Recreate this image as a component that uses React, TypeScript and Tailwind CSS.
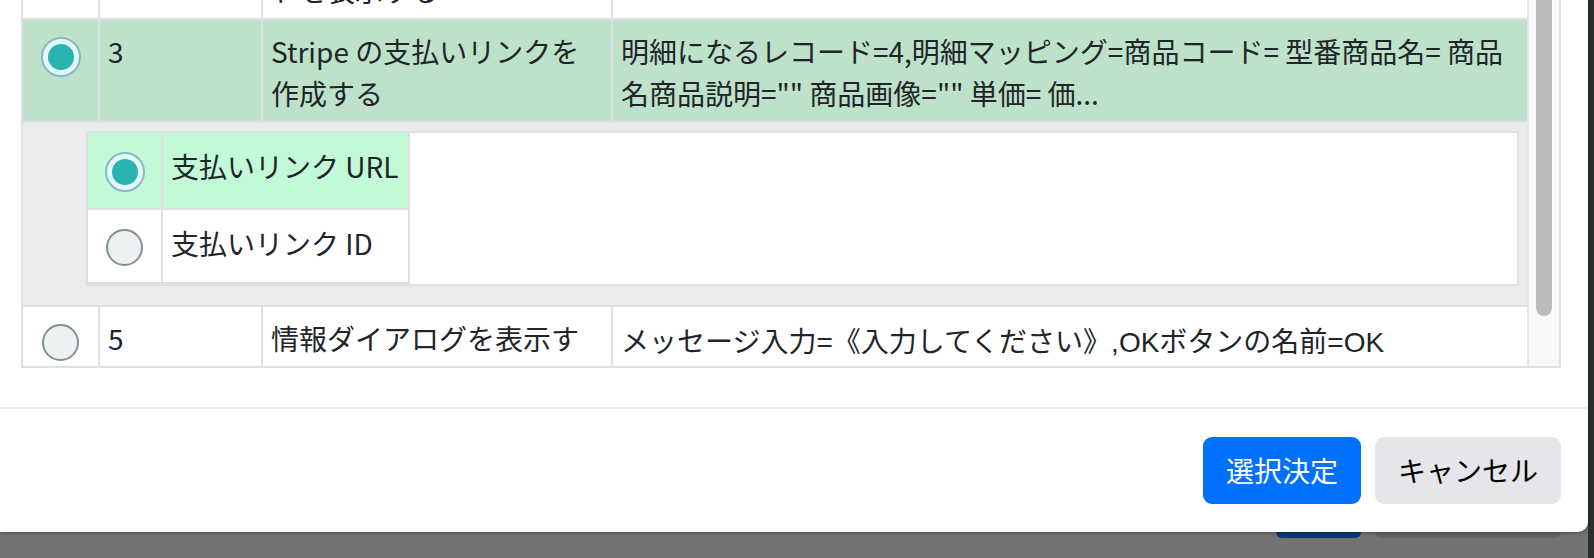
import React from "react"

const line = "border-[#dde1e4]"
const jp = "font-['Noto_Sans_CJK_JP',sans-serif]"
const sys = "font-['Liberation_Sans','Noto_Sans_CJK_JP',sans-serif]"

function Radio({ checked }: { checked: boolean }) {
  if (checked) {
    return (
      <span className="flex h-[40px] w-[40px] items-center justify-center rounded-full border-2 border-[#86b9c3] bg-[#e3f9f9]">
        <span className="h-[26px] w-[26px] rounded-full bg-[#29b2af]" />
      </span>
    )
  }
  return <span className="block h-[37px] w-[37px] rounded-full border-2 border-[#7d9393] bg-[#edf1f1]" />
}

interface RowProps {
  selected?: boolean
  no: string
  name: React.ReactNode
  params?: React.ReactNode
  paramsClass?: string
}

function Row({ selected = false, no, name, params, paramsClass = "pt-[10px]" }: RowProps) {
  return (
    <div className={`flex border-b-2 ${line} ${selected ? "bg-[#bde2c9]" : "bg-white"}`}>
      <div className={`flex w-[77px] shrink-0 justify-center border-r-2 ${line} pt-[17px]`}>
        <Radio checked={selected} />
      </div>
      <div className={`w-[163px] shrink-0 border-r-2 ${line} pb-[7px] pl-[8px] pt-[10px]`}>{no}</div>
      <div className={`w-[350px] shrink-0 whitespace-nowrap border-r-2 ${line} pb-[7px] pl-[8px] pt-[10px]`}>
        {name}
      </div>
      <div className={`flex-1 whitespace-nowrap pb-[7px] pl-[8px] ${paramsClass}`}>{params}</div>
    </div>
  )
}

function SubRow({ selected = false, label }: { selected?: boolean; label: string }) {
  return (
    <div className={`flex border-b-2 ${line} ${selected ? "h-[77px] bg-[#c2fad8]" : "h-[74px] bg-white"}`}>
      <div className={`flex w-[75px] shrink-0 items-center justify-center border-r-2 ${line} pt-[2px]`}>
        <Radio checked={selected} />
      </div>
      <div className={`w-[247px] shrink-0 whitespace-nowrap border-r-2 ${line} pl-[8px] pt-[12px]`}>{label}</div>
    </div>
  )
}

export default function App() {
  return (
    <div className="flex h-[558px] w-[1594px] overflow-hidden bg-[#2b2f2c]">
      <div className="flex w-[1588px] shrink-0 flex-col bg-[#737373]">
        {/* dialog */}
        <div className="relative z-10 flex h-[532px] shrink-0 flex-col rounded-br-[10px] bg-white shadow-[0_1px_4px_rgba(0,0,0,0.35)]">
          <div className="h-[407px] shrink-0 pl-[21px] pr-[27px]">
            <div
              className={`flex h-[368px] overflow-hidden border-x-2 border-b-2 ${line} text-[28px] leading-[42px] text-[#212529] ${jp}`}
            >
              <div className="min-w-0 flex-1">
                <div className="-mt-[83px]">
                  <Row
                    no="2"
                    name={
                      <>
                        QRコー
                        <br />
                        ドを表示する
                      </>
                    }
                  />
                  <Row
                    selected
                    no="3"
                    name={
                      <>
                        Stripe の支払いリンクを
                        <br />
                        作成する
                      </>
                    }
                    params={
                      <>
                        明細になるレコード=4,明細マッピング=商品コード= 型番商品名= 商品
                        <br />
                        名商品説明="" 商品画像="" 単価= 価...
                      </>
                    }
                  />
                  {/* expanded output picker */}
                  <div className={`border-b-2 ${line} bg-[#e9ebec] pb-[19px] pl-[63px] pr-[8px] pt-[8px]`}>
                    <div className={`h-[155px] border-2 ${line} bg-white`}>
                      <div className="w-fit">
                        <SubRow selected label="支払いリンク URL" />
                        <SubRow label="支払いリンク ID" />
                      </div>
                    </div>
                  </div>
                  <Row
                    no="5"
                    name={
                      <>
                        情報ダイアログを表示す
                        <br />る
                      </>
                    }
                    params={<span className={sys}>メッセージ入力=《入力してください》,OKボタンの名前=OK</span>}
                    paramsClass="pt-[12px]"
                  />
                </div>
              </div>
              {/* scrollbar */}
              <div className="w-[32px] shrink-0 border-l-2 border-[#e3e5e8] bg-[#f8f8f8]">
                <div className="mx-auto h-[316px] w-[16px] rounded-b-full bg-[#bcbcbc]" />
              </div>
            </div>
          </div>

          <div className={`flex flex-1 items-start justify-end gap-[14px] border-t-2 border-[#eceef0] pr-[27px] pt-[28px] text-[28px] ${jp}`}>
            <button className="h-[67px] rounded-[9px] bg-[#0071fe] px-[23px] leading-[67px] text-white">選択決定</button>
            <button className="h-[67px] rounded-[9px] bg-[#e5e5ea] px-[23px] leading-[67px] text-black">キャンセル</button>
          </div>
        </div>

        {/* dimmed dialog behind */}
        <div className="flex flex-1 items-start justify-end gap-[14px] pr-[27px]">
          <div className="h-[6px] w-[85px] rounded-b-[8px] bg-[#0b3a77]" />
          <div className="h-[6px] w-[186px] rounded-b-[8px] bg-[#666668]" />
        </div>
      </div>
      <div className="flex-1" />
    </div>
  )
}
